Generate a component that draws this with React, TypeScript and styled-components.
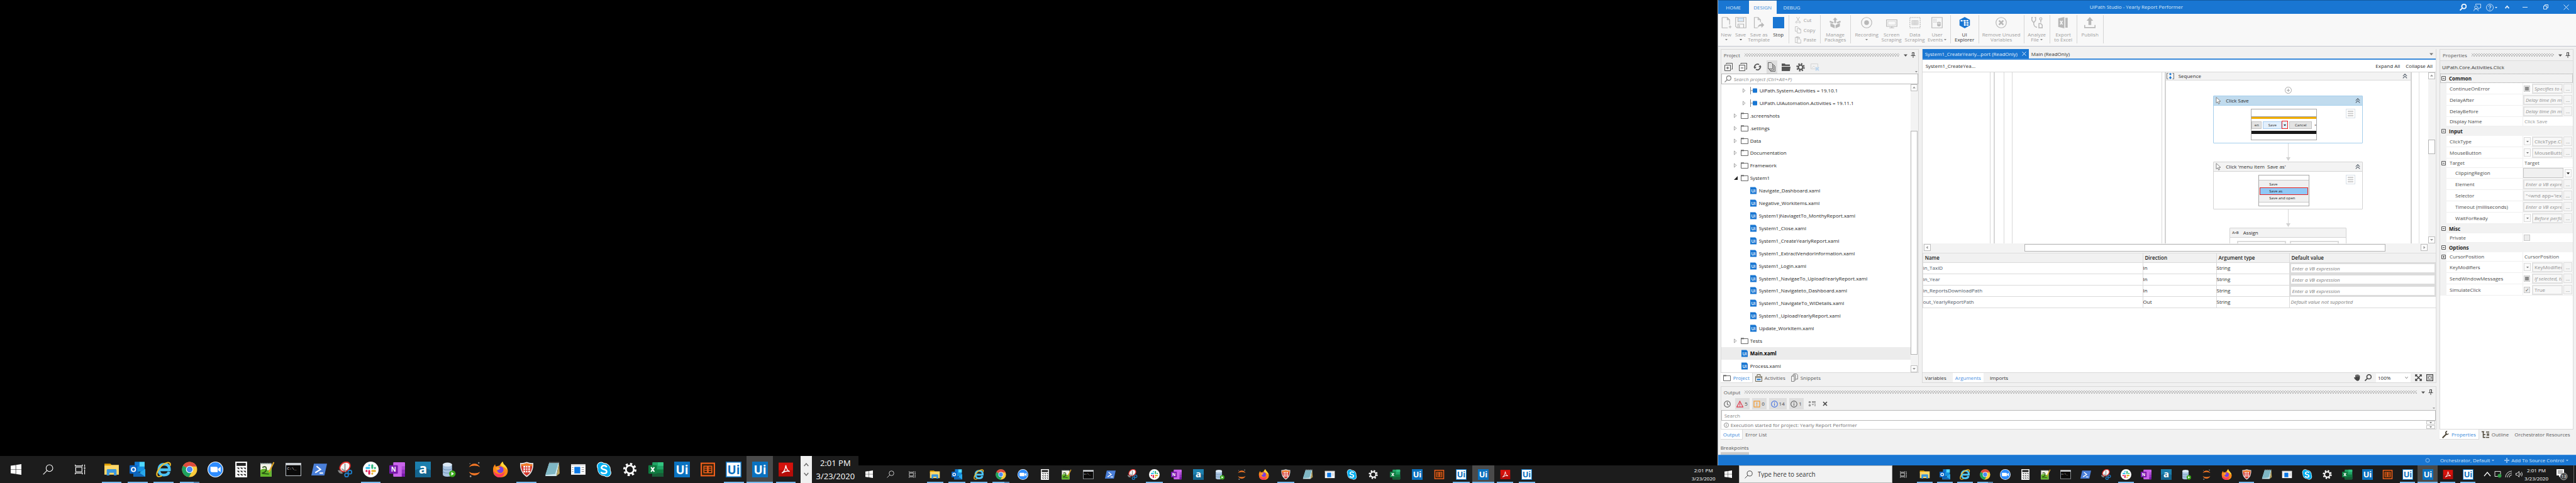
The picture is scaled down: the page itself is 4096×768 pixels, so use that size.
import React from "react";
import styled, { createGlobalStyle } from "styled-components";

const BLUE = "#1976d2";
const FONT = '"Open Sans", "Noto Sans", "Liberation Sans", sans-serif';

const Global = createGlobalStyle`
  *, *::before, *::after { box-sizing: border-box; }
  body { margin: 0; background: #000; font-family: ${FONT}; font-size: 8px; line-height: 12px; color: #2b2b2b; }
  button, input, select { font: inherit; color: inherit; margin: 0; padding: 0; border: 0; background: none; border-radius: 0; min-width: 0; }
  svg { display: block; flex: none; }
`;

/* ---------- desktop and monitors ---------- */

const Desktop = styled.div`
  display: grid;
  grid-template-columns: 1fr 1fr 1fr;
  min-height: 100vh;
`;
const Monitor = styled.section`
  display: flex;
  flex-direction: column;
  min-width: 0;
  background: #000;
`;
const Wallpaper = styled.div`
  flex: 1;
`;

/* ---------- taskbar ---------- */

const Bar = styled.footer<{ $h: number }>`
  display: flex;
  align-items: stretch;
  height: ${(p) => p.$h}px;
  background: #1c1c1c;
  color: #fff;
`;
const SysButton = styled.button<{ $w: number }>`
  width: ${(p) => p.$w}px;
  display: flex;
  align-items: center;
  justify-content: center;
  color: #fff;
`;
const AppStrip = styled.nav<{ $w: number; $left: number }>`
  display: flex;
  width: ${(p) => p.$w}px;
  margin-left: ${(p) => p.$left}px;
`;
const AppButton = styled.button<{ $state: string }>`
  flex: 1;
  display: flex;
  align-items: center;
  justify-content: center;
  background: ${(p) => (p.$state === "active" ? "#4a4a4a" : "transparent")};
  position: relative;
  &::after {
    content: "";
    position: absolute;
    left: ${(p) => (p.$state === "active" ? 0 : "12%")};
    right: ${(p) => (p.$state === "active" ? 0 : "12%")};
    bottom: 0;
    height: 2px;
    background: ${(p) =>
      p.$state === "idle" ? "none" : p.$state === "multi" ? "linear-gradient(90deg, #76b9ed 70%, #4d7fa8 70%)" : "#76b9ed"};
  }
`;
const Spacer = styled.div`
  flex: 1;
`;
const Clock = styled.div<{ $w: number; $size: number; $line: number }>`
  width: ${(p) => p.$w}px;
  display: flex;
  flex-direction: column;
  align-items: center;
  justify-content: center;
  font-size: ${(p) => p.$size}px;
  line-height: ${(p) => p.$line}px;
  color: #fff;
`;
const ScrollColumn = styled.div`
  width: 18px;
  background: #f0f0f0;
  display: flex;
  flex-direction: column;
  align-items: center;
  justify-content: space-between;
  padding: 10px 0;
`;
const TaskSearch = styled.label`
  width: 244px;
  display: flex;
  align-items: center;
  gap: 8px;
  padding-left: 8px;
  background: #f2f2f2;
  border: 1px solid #b8b8b8;
  color: #222;
  font-size: 10px;
  input { flex: 1; }
  input::placeholder { color: #333; opacity: 1; }
`;
const Tray = styled.div`
  display: flex;
  align-items: center;
  gap: 5px;
  width: 72px;
  padding-left: 9px;
`;
const Notify = styled.button`
  width: 38px;
  display: flex;
  align-items: center;
  justify-content: center;
  color: #fff;
`;
const ShowDesktop = styled.button`
  width: 4px;
  border-left: 1px solid #666;
`;

const StartIcon = ({ s }: { s: number }) => (
  <svg width={s} height={s} viewBox="0 0 24 24" fill="#fff">
    <path d="M0 3.6 11 2v9.5H0zM12 1.8 24 0v11.5H12zM0 12.5h11V22L0 20.4zM12 12.5h12V24l-12-1.8z" />
  </svg>
);
const SearchIcon = ({ s, w = 1.5, c = "currentColor" }: { s: number; w?: number; c?: string }) => (
  <svg width={s} height={s} viewBox="0 0 24 24" fill="none" stroke={c} strokeWidth={w}>
    <circle cx="15" cy="9" r="7.5" />
    <path d="M9.7 14.3 1 23" />
  </svg>
);
const TaskViewIcon = ({ s }: { s: number }) => (
  <svg width={s} height={s} viewBox="0 0 24 24" fill="none" stroke="#fff" strokeWidth="1.6">
    <path d="M2 7h14v10H2zM1 1v3h16V1M1 23v-3h16v3M22 1v5M22 12v11" />
    <path d="M20.5 7.5h3v3h-3z" fill="#fff" stroke="none" />
  </svg>
);

const UiTile = ({ bg, fg, edge }: { bg: string; fg: string; edge: string }) => (
  <>
    <rect width="24" height="24" fill={edge} />
    <rect x="1.5" y="1.5" width="21" height="21" fill={bg} />
    <text x="12" y="19" textAnchor="middle" fontFamily={FONT} fontWeight="700" fontSize="18" fill={fg}>
      Ui
    </text>
  </>
);

const glyphs: Record<string, React.ReactNode> = {
  explorer: (
    <>
      <path d="M1 3h9l2 2v4H1z" fill="#e2a100" />
      <path d="M1 6h9l2-1h11v15H1z" fill="#ffd868" />
      <path d="M4.5 21v-8q0-1.5 1.5-1.5h12q1.5 0 1.5 1.5v8h-4v-4h-7v4z" fill="#3b97dd" />
    </>
  ),
  outlook: (
    <>
      <rect x="8" y="0.5" width="15" height="15" fill="#1490df" />
      <rect x="15" y="0.5" width="8" height="7" fill="#50d9ff" />
      <rect x="8" y="0.5" width="7" height="7" fill="#0f78d4" />
      <path d="M6 11l9 6 9-6v12H6z" fill="#28a8ea" />
      <path d="M6 11l18 12H6z" fill="#1066b5" />
      <rect y="5.5" width="12" height="13" rx="1" fill="#0a63c2" />
      <circle cx="6" cy="12" r="3" fill="none" stroke="#fff" strokeWidth="1.8" />
    </>
  ),
  ie: (
    <>
      <path d="M4.5 12.5h16q.5-8.5-8-8.5-8 0-8 8.5t8 8q6 0 7.5-5" fill="none" stroke="#4cc3f4" strokeWidth="4.2" />
      <path d="M2 22C-1 17 8 3 18 1.5q5-.5 3.5 5" fill="none" stroke="#f5bf27" strokeWidth="2" />
      <path d="M2 22q2 2 7-.5" fill="none" stroke="#f5bf27" strokeWidth="1.8" />
    </>
  ),
  chrome: (
    <>
      <circle cx="12" cy="12" r="11.5" fill="#fbcb3c" />
      <path d="M12 12 2 6.2A11.5 11.5 0 0 1 22.6 7.5H12z" fill="#de4b3f" />
      <path d="M2 6.2A11.5 11.5 0 0 0 11 23.5L16 14.5 12 12z" fill="#1da260" />
      <circle cx="12" cy="12" r="5.6" fill="#fff" />
      <circle cx="12" cy="12" r="4.5" fill="#4a8af4" />
    </>
  ),
  zoom: (
    <>
      <circle cx="12" cy="12" r="12" fill="#fff" />
      <circle cx="12" cy="12" r="11" fill="#2d8cff" />
      <path d="M4.5 8h9q2 0 2 2v6h-9q-2 0-2-2zM16 11l4-3v8l-4-3z" fill="#fff" />
    </>
  ),
  calc: (
    <>
      <rect x="3" width="18" height="24" fill="#fff" />
      <rect x="5" y="2" width="14" height="4.5" fill="#222" />
      {[9, 14, 19].map((y) => (
        <path key={y} d={`M5 ${y}h4v3zM10 ${y}h4v3zM15 ${y}h4v3z`} fill="#222" />
      ))}
    </>
  ),
  npp: (
    <>
      <path d="M2 3h17v20H2z" fill="#f4f4ea" />
      <path d="M2 13q5-4 9-1t8-2v13H2z" fill="#63b62b" />
      <path d="M5 9q6-3 6 2t-5 6 9 2" fill="none" stroke="#264d12" strokeWidth="1.6" />
      <path d="M2 3h17" stroke="#9aa" strokeWidth="2" strokeDasharray="1.5 1" />
      <path d="M22.5 1 15 16" stroke="#e0a526" strokeWidth="2" />
    </>
  ),
  cmd: (
    <>
      <rect x="0.5" y="2.5" width="23" height="19" fill="#0a0a0a" stroke="#b9bec4" />
      <rect x="0.5" y="2.5" width="23" height="3" fill="#d5d9dd" />
      <text x="2.5" y="12" fontFamily="Liberation Mono, monospace" fontSize="6" fill="#ddd">
        C:\_
      </text>
    </>
  ),
  powershell: (
    <>
      <path d="M4 3h20l-4 18H0z" fill="#4a7fd8" />
      <path d="M8 7l6 5-8 5M12.5 17.5H18" fill="none" stroke="#fff" strokeWidth="2" />
    </>
  ),
  snip: (
    <>
      <ellipse cx="12" cy="8" rx="8.5" ry="6.5" transform="rotate(-38 12 8)" fill="#f3f3f3" stroke="#e2302d" strokeWidth="1.8" />
      <path d="M12 3v12M7 11l7 5" stroke="#8c8c8c" strokeWidth="1.5" />
      <path d="M1 13q5 0 8 5-6 2-8-5z" fill="#888" />
      <circle cx="19.5" cy="16" r="2.8" fill="none" stroke="#1f7bc4" strokeWidth="1.8" />
      <circle cx="14.5" cy="20.5" r="2.8" fill="none" stroke="#1f7bc4" strokeWidth="1.8" />
    </>
  ),
  slack: (
    <>
      <circle cx="12" cy="12" r="12" fill="#fff" />
      <g strokeWidth="3" strokeLinecap="round">
        <path d="M9.7 5.5v.2M5.5 9.7h4.2" stroke="#36c5f0" />
        <path d="M14.3 5.5v4.2M18.5 9.7h-.2" stroke="#2eb67d" />
        <path d="M14.3 18.5v-.2M14.3 14.3h4.2" stroke="#ecb22e" />
        <path d="M9.7 14.3v4.2M5.5 14.3h.2" stroke="#e01e5a" />
      </g>
    </>
  ),
  onenote: (
    <>
      <rect x="6" y="1" width="18" height="22" rx="1" fill="#ca64ea" />
      <path d="M19 7h5v5h-5z" fill="#ae4bd5" />
      <path d="M19 12h5v6h-5z" fill="#9332bf" />
      <path d="M19 18h5v4q0 1-1 1h-4z" fill="#7719aa" />
      <rect y="5.5" width="13" height="13" rx="1" fill="#7719aa" />
      <text x="6.5" y="15.5" textAnchor="middle" fontFamily={FONT} fontWeight="700" fontSize="9.5" fill="#fff">
        N
      </text>
    </>
  ),
  alteryx: (
    <>
      <rect width="24" height="24" fill="#1c7fae" />
      <path d="M0 13q12-6 24 0v11H0z" fill="#14658f" />
      <text x="12" y="18.5" textAnchor="middle" fontFamily={FONT} fontWeight="700" fontSize="21" fill="#fff">
        a
      </text>
    </>
  ),
  database: (
    <>
      <path d="M3 4v16q0 3 7 3t7-3V4z" fill="#a9c4e0" />
      <ellipse cx="10" cy="4.5" rx="7" ry="3" fill="#dce9f5" />
      <path d="M3 9.5q0 3 7 3t7-3M3 14.5q0 3 7 3t7-3" fill="none" stroke="#6f93b8" />
      <circle cx="17.5" cy="18.5" r="5" fill="#3aa81c" />
      <path d="M16 15.7v5.6l4-2.8z" fill="#fff" />
    </>
  ),
  jupyter: (
    <>
      <path d="M3.5 8.5q3-5.5 8.5-5.5t8.5 5.5Q17 6.300 12 6.300T3.5 8.500zM3.5 15.5q3 5.5 8.5 5.5t8.5-5.5Q17 17.700 12 17.700T3.5 15.500z" fill="#f37726" />
      <circle cx="18.5" cy="2" r="1.2" fill="#888" />
      <circle cx="6" cy="22.5" r="1.3" fill="#999" />
      <circle cx="5" cy="3" r="0.8" fill="#777" />
    </>
  ),
  firefox: (
    <>
      <path d="M1 13Q.5 8 4 4l1 3.5L11 6q2-4 4.5-6 1 4 4 6 4 4 4 8-.5 10-11.500 10T1 13z" fill="#ff8a16" />
      <path d="M1 13q3 5 8 6t10-4q-1 8-8 9T1 13z" fill="#ff3b5c" />
      <path d="M15.5 0q1 4 4 6 3 3 3 7-3-4-6-5t-4-3q1-3 3-5z" fill="#ffd83a" />
      <circle cx="12" cy="12.5" r="5" fill="#7a3fe0" />
      <path d="M5 9q4-1 7 1-2 3-5 3z" fill="#ffa62b" />
    </>
  ),
  shield: (
    <>
      <path d="M12 .5q5 2 10 1.5 1 15-10 21.5Q1 17 2 2q5 .5 10-1.500z" fill="#e8e8e8" />
      <path d="M12 2.5q4 1.5 8.5 1.5.5 12-8.5 17.5Q3 16 3.5 4 8 4 12 2.500z" fill="#d3352b" />
      <path d="M12 2.5q4 1.5 8.5 1.5v3h-17V4Q8 4 12 2.500z" fill="#ef7c26" />
      <path d="M7 6.500h10v10H7z" fill="#fff" />
      <path d="M7 9.700h10M7 13h10M10.300 6.500v10M13.700 6.500v10" stroke="#d3352b" strokeWidth="1.2" />
    </>
  ),
  notepad: (
    <>
      <path d="M7 2h15l-4 20H1z" fill="#cfe9ef" />
      <path d="M7 2h14l-5 17-15 1.500z" fill="#7fb7c4" />
      <path d="M22 2l1 16-5 4z" fill="#b9a35e" />
      <path d="M7 1.500h15" stroke="#777" strokeWidth="2" strokeDasharray="1 1" />
    </>
  ),
  panel: (
    <>
      <rect x="1" y="4" width="22" height="16" fill="#fff" />
      <rect x="1" y="4" width="22" height="2" fill="#cfcfcf" />
      <rect x="6" y="8" width="9" height="10" fill="#0a78e6" />
      <path d="M17 9h4M17 12h4M17 15h4M2.5 9h2M2.5 12h2M2.5 15h2" stroke="#999" />
    </>
  ),
  skype: (
    <>
      <circle cx="12" cy="12" r="10" fill="#fff" />
      <circle cx="7.5" cy="7" r="6.5" fill="#fff" />
      <circle cx="16.5" cy="17" r="6.5" fill="#fff" />
      <circle cx="12" cy="12" r="9.2" fill="#00aff0" />
      <circle cx="7.5" cy="7" r="5.5" fill="#00aff0" />
      <circle cx="16.5" cy="17" r="5.5" fill="#00aff0" />
      <path d="M16 8.500Q15 6 12 6t-4 3q0 2 4 3t4 3q0 3-4 3t-4.500-2.500" fill="none" stroke="#fff" strokeWidth="2.4" />
    </>
  ),
  gear: (
    <>
      <circle cx="12" cy="12" r="6" fill="none" stroke="#fff" strokeWidth="2.6" />
      <circle cx="12" cy="12" r="8.6" fill="none" stroke="#fff" strokeWidth="3" strokeDasharray="3.4 3.354" />
    </>
  ),
  excel: (
    <>
      <rect x="6" y="1" width="17" height="22" rx="1" fill="#21a366" />
      <path d="M14.5 1H22q1 0 1 1v4.500h-8.500z" fill="#33c481" />
      <path d="M6 12h17v10q0 1-1 1H6z" fill="#107c41" />
      <path d="M6 17.500h17V22q0 1-1 1H6z" fill="#185c37" />
      <rect y="5.5" width="13" height="13" rx="1" fill="#107c41" />
      <path d="M4 8.500l5 7M9 8.500l-5 7" stroke="#fff" strokeWidth="1.9" />
    </>
  ),
  uipath: <UiTile bg="#0b72c0" edge="#0b72c0" fg="#fff" />,
  uiwhite: <UiTile bg="#fff" edge="#0b72c0" fg="#0b72c0" />,
  reader: (
    <>
      <rect x="1" y="1.5" width="22" height="21" fill="#f2601c" />
      <rect x="3" y="3.5" width="18" height="17" fill="#33200c" />
      <path d="M6 7h5.500v10H6zM12.500 7H18v10h-5.500z" fill="none" stroke="#f2601c" strokeWidth="1.5" />
      <path d="M7 10h4M7 13h4M13 10h4M13 13h4" stroke="#f2601c" strokeWidth="1.2" />
    </>
  ),
  pdf: (
    <>
      <rect x="1" y="1.5" width="22" height="21" fill="#d4120c" />
      <path d="M1 13h22v9.500H1z" fill="#a80c08" opacity=".7" />
      <path d="M6 17.500q5-3 6-12 1 8 6 9.500-5-2-12 2.500z" fill="none" stroke="#fff" strokeWidth="1.4" />
    </>
  ),
};

const apps: [string, string][] = [
  ["explorer", "open"], ["outlook", "open"], ["ie", "open"], ["chrome", "multi"], ["zoom", "idle"],
  ["calc", "idle"], ["npp", "idle"], ["cmd", "idle"], ["powershell", "idle"], ["snip", "idle"],
  ["slack", "open"], ["onenote", "idle"], ["alteryx", "idle"], ["database", "idle"], ["jupyter", "idle"],
  ["firefox", "idle"], ["shield", "open"], ["notepad", "idle"], ["panel", "idle"], ["skype", "idle"],
  ["gear", "idle"], ["excel", "idle"], ["uipath", "idle"], ["reader", "idle"], ["uiwhite", "open"],
  ["uipath", "active"], ["pdf", "open"],
];
const appsWithExtra: [string, string][] = [...apps, ["uiwhite", "open"]];

const Apps = ({ list, width, left, size }: { list: [string, string][]; width: number; left: number; size: number }) => (
  <AppStrip $w={width} $left={left}>
    {list.map(([name, state], i) => (
      <AppButton key={i} $state={state} aria-label={name}>
        <svg width={size} height={size} viewBox="0 0 24 24">
          {glyphs[name]}
        </svg>
      </AppButton>
    ))}
  </AppStrip>
);

const Chevron = ({ s, d, c, w = 2 }: { s: number; d: "up" | "down"; c: string; w?: number }) => (
  <svg width={s} height={s} viewBox="0 0 12 12" fill="none" stroke={c} strokeWidth={w}>
    <path d={d === "up" ? "M1 9l5-6 5 6" : "M1 3l5 6 5-6"} />
  </svg>
);

/* ---------- small shared drawings ---------- */

const Caret = ({ c = "#777", s = 5 }: { c?: string; s?: number }) => (
  <svg width={s} height={s} viewBox="0 0 6 6">
    <path d="M0 1.500h6L3 5z" fill={c} />
  </svg>
);
const Pin = ({ c = "#555" }: { c?: string }) => (
  <svg width="8" height="9" viewBox="0 0 8 9" fill="none" stroke={c}>
    <path d="M2.500 .5h3v5h-3zM.5 5.500h7M4 5.500v3.500" />
    <path d="M5 .5v5" />
  </svg>
);
const Arrow = ({ dir, c = "#999" }: { dir: "up" | "down" | "left" | "right"; c?: string }) => {
  const d = { up: "M1 4.500h5L3.500 1.500z", down: "M1 2h5L3.500 5z", left: "M4.500 1v5L1.500 3.500z", right: "M2.500 1v5l3-2.500z" }[dir];
  return (
    <svg width="7" height="7" viewBox="0 0 7 7">
      <path d={d} fill={c} />
    </svg>
  );
};
const FolderIcon = ({ c = "#666" }: { c?: string }) => (
  <svg width="12" height="10" viewBox="0 0 12 10" fill="none" stroke={c}>
    <path d="M.5 1.500h11v8H.5z" />
    <path d="M0 1.300h5" strokeWidth="2" />
  </svg>
);
const Collapse = () => (
  <svg width="8" height="8" viewBox="0 0 10 10" fill="none" stroke="#4a5562" strokeWidth="1.3">
    <path d="M1 5l4-4 4 4M1 9.300l4-4 4 4" />
  </svg>
);

/* ---------- studio window ---------- */

const Studio = styled.main`
  flex: 1;
  min-height: 0;
  display: flex;
  flex-direction: column;
  background: #f1f1f1;
  border-left: 1px solid #a9adb3;
`;
const TitleBar = styled.header`
  height: 22px;
  display: flex;
  background: ${BLUE};
  border-top: 1px solid #135a9f;
  color: #d9e9f9;
`;
const RibbonTab = styled.button<{ $on?: boolean; $w: number }>`
  width: ${(p) => p.$w}px;
  background: ${(p) => (p.$on ? "#f8f8f8" : "transparent")};
  color: ${(p) => (p.$on ? "#3c8bdb" : "#d9e9f9")};
`;
const Title = styled.h1`
  flex: 1;
  margin: 0;
  padding-left: 16px;
  text-align: center;
  font-size: 8px;
  font-weight: 400;
  line-height: 20px;
`;
const WindowButton = styled.button<{ $w: number }>`
  width: ${(p) => p.$w}px;
  display: flex;
  gap: 2px;
  align-items: center;
  justify-content: center;
`;

const Ribbon = styled.div`
  height: 52px;
  display: flex;
  align-items: flex-start;
  padding-top: 2px;
  background: #f8f8f8;
  border-bottom: 1px solid #c3c7d0;
`;
const RibbonGroup = styled.div<{ $pad?: number }>`
  display: flex;
  height: 45px;
  padding: 0 ${(p) => p.$pad ?? 0}px;
  border-right: 1px solid #d6d6d6;
`;
const Tool = styled.button<{ $w: number; $on?: boolean }>`
  width: ${(p) => p.$w}px;
  display: flex;
  flex-direction: column;
  align-items: center;
  gap: 6px;
  padding-top: 3px;
  color: ${(p) => (p.$on ? "#3a3a3a" : "#a0a0a0")};
  line-height: 8px;
  text-align: center;
  white-space: nowrap;
`;
const ToolLabel = styled.span`
  display: flex;
  flex-direction: column;
  align-items: center;
`;
const ToolLine = styled.span`
  display: flex;
  align-items: center;
  gap: 2px;
  min-height: 8px;
`;
const Clip = styled.div`
  display: flex;
  flex-direction: column;
  justify-content: space-between;
  width: 49px;
  padding: 2px 0 0 9px;
`;
const ClipButton = styled.button`
  display: flex;
  align-items: center;
  gap: 4px;
  height: 12px;
  color: #a0a0a0;
`;

type ToolProps = { w: number; on?: boolean; lines: string[]; caret?: "below" | "inline"; caretColor?: string; children: React.ReactNode };
const RibbonTool = ({ w, on, lines, caret, caretColor = "#888", children }: ToolProps) => (
  <Tool $w={w} $on={on}>
    <svg width="18" height="18" viewBox="0 0 24 24" fill="none" stroke="#b8b8b8" strokeWidth="1.6">
      {children}
    </svg>
    <ToolLabel>
      {lines.map((l, i) => (
        <ToolLine key={l}>
          {l}
          {caret === "inline" && i === lines.length - 1 && <Caret c={caretColor} s={4} />}
        </ToolLine>
      ))}
      {caret === "below" && (
        <ToolLine>
          <Caret c={caretColor} s={4} />
        </ToolLine>
      )}
    </ToolLabel>
  </Tool>
);

const Workspace = styled.div`
  flex: 1;
  min-height: 0;
  display: flex;
  gap: 5px;
  padding: 4px 4px 0;
`;
const LeftAndCenter = styled.div`
  flex: 1;
  min-width: 0;
  display: flex;
  flex-direction: column;
  gap: 5px;
`;
const UpperRow = styled.div`
  flex: 1;
  min-height: 0;
  display: flex;
  gap: 5px;
`;
const Dock = styled.section<{ $w?: number }>`
  width: ${(p) => (p.$w ? p.$w + "px" : "auto")};
  display: flex;
  flex-direction: column;
  min-height: 0;
`;
const DockBody = styled.div`
  flex: 1;
  min-height: 0;
  display: flex;
  flex-direction: column;
  border: 1px solid #d9d9d9;
`;
const DockHeader = styled.div`
  height: 17px;
  display: flex;
  align-items: center;
  gap: 7px;
  padding: 0 4px;
  color: #5c5c5c;
`;
const Grip = styled.div`
  flex: 1;
  height: 5px;
  background-image: radial-gradient(circle, #a8a8a8 0.6px, transparent 1px), radial-gradient(circle, #a8a8a8 0.6px, transparent 1px);
  background-size: 4px 4px;
  background-position: 0 0, 2px 2px;
`;
const HeaderActions = styled.div`
  display: flex;
  align-items: center;
  gap: 5px;
`;
const DockTabs = styled.div`
  display: flex;
  height: 16px;
`;
const DockTab = styled.button<{ $on?: boolean }>`
  display: flex;
  align-items: center;
  gap: 4px;
  padding: 0 4px;
  background: ${(p) => (p.$on ? "#fff" : "transparent")};
  color: ${(p) => (p.$on ? "#3c8bdb" : "#5c5c5c")};
  border-right: 1px solid ${(p) => (p.$on ? "#dcdcdc" : "transparent")};
  border-bottom: 1px solid ${(p) => (p.$on ? "#dcdcdc" : "transparent")};
  white-space: nowrap;
`;

/* project panel */

const IconRow = styled.div`
  height: 21px;
  display: flex;
  align-items: center;
  padding-left: 3px;
`;
const IconButton = styled.button<{ $on?: boolean }>`
  width: 17px;
  height: 21px;
  margin-right: 6px;
  display: flex;
  align-items: center;
  justify-content: center;
  background: ${(p) => (p.$on ? "#dedede" : "transparent")};
`;
const More = styled.span`
  margin-left: auto;
  align-self: flex-end;
  padding: 0 1px 1px 0;
`;
const SearchField = styled.label`
  height: 17px;
  display: flex;
  align-items: center;
  gap: 4px;
  padding: 0 4px;
  background: #fff;
  border: 1px solid #b9b9b9;
  color: #777;
  input { flex: 1; }
  input::placeholder { color: #8a8a8a; opacity: 1; }
`;
const ItalicField = styled(SearchField)`
  input { font-style: italic; }
`;
const TreeArea = styled.div`
  flex: 1;
  min-height: 0;
  display: flex;
  background: #fff;
`;
const Tree = styled.ul`
  flex: 1;
  margin: 0;
  padding: 0;
  list-style: none;
  display: flex;
  flex-direction: column;
`;
const TreeItem = styled.li<{ $indent: number; $on?: boolean }>`
  flex: 1;
  display: flex;
  align-items: center;
  padding-left: ${(p) => p.$indent}px;
  background: ${(p) => (p.$on ? "#ececec" : "transparent")};
  color: ${(p) => (p.$on ? "#000" : "#262626")};
  font-weight: ${(p) => (p.$on ? 700 : 400)};
`;
const Twisty = styled.span`
  width: 11px;
`;
const ItemIcon = styled.span<{ $w: number }>`
  width: ${(p) => p.$w}px;
`;
const VBar = styled.div`
  width: 12px;
  display: flex;
  flex-direction: column;
  background: #f3f3f3;
`;
const ScrollButton = styled.button`
  width: 11px;
  height: 11px;
  display: flex;
  align-items: center;
  justify-content: center;
  background: #fff;
  border: 1px solid #bdbdbd;
`;
const Track = styled.div<{ $grow: number }>`
  flex: ${(p) => p.$grow};
`;
const VThumb = styled.div<{ $grow: number }>`
  flex: ${(p) => p.$grow};
  width: 11px;
  background: #fff;
  border: 1px solid #b4b4b4;
`;

const XamlIcon = () => (
  <svg width="10" height="12" viewBox="0 0 10 12">
    <path d="M0 .5h8L10 2.500v9H0z" fill={BLUE} />
    <text x="5" y="8.5" textAnchor="middle" fontFamily={FONT} fontWeight="600" fontSize="7" fill="#fff">
      Ui
    </text>
  </svg>
);
const DepIcon = () => (
  <svg width="13" height="12" viewBox="0 0 13 12">
    <path d="M1.500 0v12M1.500 6h4" stroke="#888" fill="none" />
    <rect x="5" y="2.5" width="7" height="7" rx="1" fill={BLUE} />
  </svg>
);
const ClosedTwisty = () => (
  <svg width="5" height="8" viewBox="0 0 5 8" fill="none" stroke="#9a9a9a" strokeWidth="0.9">
    <path d="M.5 1v6L4 4z" />
  </svg>
);
const OpenTwisty = () => (
  <svg width="6" height="6" viewBox="0 0 6 6">
    <path d="M6 0v6H0z" fill="#222" />
  </svg>
);

type Node = { t: string; kind: "dep" | "folder" | "open" | "file" | "root"; on?: boolean };
const nodes: Node[] = [
  { t: "UiPath.System.Activities = 19.10.1", kind: "dep" },
  { t: "UiPath.UIAutomation.Activities = 19.11.1", kind: "dep" },
  { t: ".screenshots", kind: "folder" },
  { t: ".settings", kind: "folder" },
  { t: "Data", kind: "folder" },
  { t: "Documentation", kind: "folder" },
  { t: "Framework", kind: "folder" },
  { t: "System1", kind: "open" },
  { t: "Navigate_Dashboard.xaml", kind: "file" },
  { t: "Negative_Workitems.xaml", kind: "file" },
  { t: "System1)NaviagetTo_MonthyReport.xaml", kind: "file" },
  { t: "System1_Close.xaml", kind: "file" },
  { t: "System1_CreateYearlyReport.xaml", kind: "file" },
  { t: "System1_ExtractVendorInformation.xaml", kind: "file" },
  { t: "System1_Login.xaml", kind: "file" },
  { t: "System1_NavigaeTo_UploadYearlyReport.xaml", kind: "file" },
  { t: "System1_Navigateto_Dashboard.xaml", kind: "file" },
  { t: "System1_NavigateTo_WIDetails.xaml", kind: "file" },
  { t: "System1_UploadYearlyReport.xaml", kind: "file" },
  { t: "Update_WorkItem.xaml", kind: "file" },
  { t: "Tests", kind: "folder" },
  { t: "Main.xaml", kind: "root", on: true },
  { t: "Process.xaml", kind: "root" },
];
const indents = { dep: 34, folder: 20, open: 20, file: 46, root: 32 };

/* designer */

const Designer = styled.section`
  flex: 1;
  min-width: 0;
  display: flex;
  flex-direction: column;
  border: 1px solid #d9d9d9;
  border-top: 0;
`;
const DocTabs = styled.div`
  height: 17px;
  display: flex;
  border-bottom: 2px solid #3c8bdb;
  padding-right: 4px;
  align-items: stretch;
`;
const DocTab = styled.button<{ $on?: boolean }>`
  display: flex;
  align-items: center;
  gap: 7px;
  padding: 0 4px;
  background: ${(p) => (p.$on ? BLUE : "transparent")};
  color: ${(p) => (p.$on ? "#e4effa" : "#333")};
  white-space: nowrap;
`;
const DocMenu = styled.button`
  margin-left: auto;
`;
const Crumbs = styled.div`
  height: 20px;
  display: flex;
  align-items: center;
  gap: 9px;
  padding: 0 5px;
  background: #fff;
  border-bottom: 1px solid #d9d9d9;
`;
const CanvasRow = styled.div`
  height: 272px;
  display: flex;
  background: #fff;
`;
const Frame = styled.div<{ $line?: number; $gap: number }>`
  flex: 1;
  min-width: 0;
  display: flex;
  margin-left: ${(p) => p.$gap}px;
  border-left: ${(p) => p.$line ?? 1}px solid #d8d8d8;
`;
const OuterSeq = styled(Frame)`
  border-right: 1px solid #dedede;
  padding-right: 11px;
  margin-right: 14px;
`;
const Sequence = styled.div`
  flex: 1;
  display: flex;
  flex-direction: column;
  overflow: hidden;
  margin-left: 4px;
  border: solid #d3d3d3;
  border-width: 0 2px;
`;
const SequenceHeader = styled.div`
  height: 13px;
  flex: none;
  display: flex;
  align-items: center;
  gap: 7px;
  padding: 0 5px 0 1px;
  background: #f3f3f3;
  border-bottom: 1px solid #d9d9d9;
`;
const Push = styled.span`
  margin-left: auto;
`;
const Steps = styled.div`
  display: flex;
  flex-direction: column;
  align-items: center;
  padding-top: 10px;
`;
const AddStep = styled.button`
  margin-bottom: 3px;
`;
const Activity = styled.article<{ $w: number; $on?: boolean }>`
  width: ${(p) => p.$w}px;
  flex: none;
  background: #fff;
  border: 1px solid ${(p) => (p.$on ? "#a5cfec" : "#d4d4d4")};
  border-radius: 1px;
`;
const ActivityHead = styled.header<{ $on?: boolean }>`
  height: 15px;
  display: flex;
  align-items: center;
  gap: 7px;
  padding: 0 3px;
  background: ${(p) => (p.$on ? "#c0dbee" : "#f3f3f3")};
  border-bottom: 1px solid ${(p) => (p.$on ? "#a5cfec" : "#d4d4d4")};
`;
const ActivityBody = styled.div`
  height: 59px;
  display: grid;
  grid-template-columns: 45px 1fr 58px;
  justify-items: center;
  padding-top: 5px;
`;
const Spot = styled.div`
  grid-column: 2;
`;
const Burger = styled.button`
  width: 15px;
  height: 15px;
  margin-left: 20px;
  border: 1px solid #d8e0e8;
  display: flex;
  align-items: center;
  justify-content: center;
`;
const Shot = styled.div<{ $w: number }>`
  width: ${(p) => p.$w}px;
  height: 50px;
  border: 1px solid #a8a8a8;
  display: flex;
  flex-direction: column;
  overflow: hidden;
  background: #fff;
  font-size: 6px;
  line-height: 10px;
`;
const GoldLine = styled.div`
  margin-top: 11px;
  height: 4px;
  flex: none;
  background: #f2ae00;
  border-top: 1px solid #999;
`;
const PromptRow = styled.div`
  height: 19px;
  flex: none;
  display: flex;
  align-items: center;
  gap: 2px;
`;
const PromptButton = styled.span<{ $w: number; $blue?: boolean }>`
  width: ${(p) => p.$w}px;
  height: 12px;
  flex: none;
  text-align: center;
  background: ${(p) => (p.$blue ? "#e2effc" : "#e3e3e3")};
  border: 1px solid ${(p) => (p.$blue ? "#a9cdf0" : "#c3c3c3")};
`;
const RedBox = styled.span`
  width: 10px;
  height: 13px;
  flex: none;
  margin-left: -2px;
  border: 1px solid #f02020;
  background: #e2effc;
  display: flex;
  align-items: center;
  justify-content: center;
`;
const BlackLine = styled.div`
  height: 5px;
  flex: none;
  background: #1a1a1a;
`;
const MenuShot = styled.div`
  margin-top: 7px;
  padding: 1px;
  background: #f0f0f0;
  border: solid #c8c8c8;
  border-width: 1px 0;
`;
const MenuLine = styled.div<{ $hot?: boolean }>`
  height: ${(p) => (p.$hot ? 12 : 10)}px;
  line-height: 10px;
  padding-left: ${(p) => (p.$hot ? 14 : 15)}px;
  color: #222;
  background: ${(p) => (p.$hot ? "#90c8f6" : "transparent")};
  border: ${(p) => (p.$hot ? "1px solid #e62020" : "0 solid transparent")};
`;
const AssignMark = styled.b`
  font-size: 6px;
  color: #666;
`;
const AssignBody = styled.div`
  display: flex;
  justify-content: space-between;
  padding: 5px 11px;
`;
const AssignInput = styled.input`
  width: 78px;
  height: 16px;
  text-align: center;
  border: 2px solid #dcdcdc;
`;
const HBar = styled.div`
  height: 16px;
  display: flex;
  align-items: flex-start;
  padding: 1px 13px 0 2px;
  background: #f3f3f3;
  border-bottom: 1px solid #dedede;
`;
const HThumb = styled.div<{ $grow: number }>`
  flex: ${(p) => p.$grow};
  height: 12px;
  background: #fff;
  border: 1px solid #b4b4b4;
`;
const ArgArea = styled.div`
  flex: 1;
  min-height: 0;
  background: #fff;
  border-bottom: 1px solid #d9d9d9;
`;
const ArgTable = styled.table`
  width: 100%;
  border-collapse: collapse;
  table-layout: fixed;
  th, td { padding: 0; height: 18px; text-align: left; border: 1px solid #dadada; border-width: 0 0 1px 1px; }
  th { height: 14px; padding-left: 3px; background: #f1f1f1; color: #1c1c1c; font-weight: 600; }
  td:first-child { color: #4c5664; }
  em { color: #7d7d7d; padding-left: 2px; }
`;
const ExprInput = styled.input`
  display: block;
  width: 100%;
  height: 17px;
  padding-left: 2px;
  border: 2px solid #dcdcdc;
  background: #fff;
  font-style: italic;
  &::placeholder { color: #7d7d7d; opacity: 1; }
`;
const DesignerFoot = styled.div`
  height: 15px;
  display: flex;
  align-items: center;
`;
const FootTab = styled.button<{ $on?: boolean }>`
  height: 15px;
  margin-right: 6px;
  padding: 0 4px;
  background: ${(p) => (p.$on ? "#fff" : "transparent")};
  color: ${(p) => (p.$on ? "#4a90e2" : "#333")};
`;
const FootTools = styled.div`
  margin-left: auto;
  display: flex;
  align-items: center;
  gap: 7px;
  padding-right: 4px;
`;
const ZoomBox = styled.div`
  width: 55px;
  height: 14px;
  display: flex;
  align-items: center;
  padding: 0 4px 0 3px;
  background: #fff;
`;
const ZoomSelect = styled.select`
  appearance: none;
  flex: 1;
`;

/* output */

const OutputBar = styled.div`
  height: 20px;
  display: flex;
  align-items: center;
  padding-left: 4px;
`;
const TimeButton = styled.button`
  margin-right: 7px;
`;
const Counter = styled.button<{ $w: number; $c: string }>`
  width: ${(p) => p.$w}px;
  height: 18px;
  margin-right: 4px;
  display: flex;
  align-items: center;
  justify-content: center;
  gap: 2px;
  background: #dedede;
  color: #444;
  svg { color: ${(p) => p.$c}; }
`;
const LogRow = styled.div`
  height: 13px;
  display: flex;
  align-items: center;
  gap: 3px;
  padding-left: 4px;
  background: #fff;
  color: #757575;
`;
const LogScroll = styled.div`
  margin-left: auto;
  display: flex;
  flex-direction: column;
  gap: 1px;
  padding-right: 1px;
  button { width: 14px; height: 6px; display: flex; align-items: center; justify-content: center; border: 1px solid #c4c4c4; }
`;
const Breakpoints = styled.div`
  height: 24px;
  display: flex;
  align-items: flex-end;
  padding-left: 4px;
`;
const BreakTab = styled.button`
  height: 17px;
  padding-bottom: 1px;
  line-height: 10px;
  border-bottom: 4px solid #cbcbcb;
  color: #555;
`;
const StatusBar = styled.div`
  height: 17px;
  display: flex;
  align-items: center;
  justify-content: flex-end;
  gap: 3px;
  padding-right: 12px;
  background: ${BLUE};
  color: #d2e4f7;
  border-top: 1px solid #4a93dd;
`;
const StatusButton = styled.button`
  display: flex;
  align-items: center;
  gap: 3px;
  margin-left: 13px;
`;

/* properties */

const TypeName = styled.div`
  height: 21px;
  padding-left: 3px;
  line-height: 19px;
  background: #eeeeee;
  border-top: 1px solid #dcdcdc;
  color: #333;
`;
const PropArea = styled.div`
  flex: 1;
  background: #fff;
`;
const Group = styled.h2<{ $first?: boolean }>`
  height: 15px;
  margin: 0;
  display: flex;
  align-items: center;
  gap: 5px;
  padding-left: 2px;
  background: #f2f2f2;
  font-size: 8px;
  font-weight: 700;
  color: #222;
  outline: ${(p) => (p.$first ? "1px dotted #999" : "none")};
  outline-offset: -1px;
`;
const Prop = styled.div<{ $h: number }>`
  height: ${(p) => p.$h}px;
  display: grid;
  grid-template-columns: 10px 121px 1fr;
`;
const Gutter = styled.div`
  background: #f2f2f2;
  display: flex;
  align-items: center;
  justify-content: center;
`;
const PropName = styled.label<{ $nested?: boolean }>`
  padding-left: ${(p) => (p.$nested ? 14 : 5)}px;
  display: flex;
  align-items: center;
  color: #4a4a4a;
  border-bottom: 1px solid #efefef;
`;
const PropValue = styled.div`
  display: flex;
  align-items: center;
  gap: 1px;
  min-width: 0;
  border: solid #efefef;
  border-width: 0 0 1px 1px;
  padding-right: 1px;
`;
const PropInput = styled.input<{ $italic?: boolean }>`
  flex: 1;
  width: 10px;
  height: 16px;
  padding-left: 2px;
  background: #f8f8f8;
  border: 2px solid #e2e2e2;
  font-style: ${(p) => (p.$italic ? "italic" : "normal")};
  color: #8f8f8f;
`;
const PlainInput = styled.input`
  flex: 1;
  padding-left: 2px;
  color: ${(p) => (p.disabled ? "#9b9b9b" : "#555")};
`;
const Dots = styled.button`
  width: 14px;
  height: 15px;
  background: #f5f5f5;
  border: 1px solid #dadada;
  color: #888;
  line-height: 12px;
`;
const Drop = styled.button`
  width: 11px;
  height: 13px;
  margin: 0 1px;
  display: flex;
  align-items: center;
  justify-content: center;
  background: #fafafa;
  border: 1px solid #dadada;
`;
const Check = styled.input`
  appearance: none;
  width: 10px;
  height: 10px;
  margin: 0 2px 0 1px;
  background: #ececec;
  border: 1px solid #c8c8c8;
  display: grid;
  place-items: center;
  &[data-mixed="true"]::before { content: ""; width: 6px; height: 6px; background: #8c8c8c; }
  &:checked::before { content: "✓"; color: #555; line-height: 8px; font-size: 8px; }
`;
const Region = styled.select`
  appearance: none;
  flex: 1;
  height: 16px;
  background: #f0f0f0;
  border: 1px solid #c6c6c6;
`;

const Toggle = ({ plus }: { plus?: boolean }) => (
  <svg width="7" height="7" viewBox="0 0 7 7" fill="none" stroke="#555">
    <path d={plus ? "M.5.5h6v6h-6zM2 3.500h3M3.500 2v3" : "M.5.5h6v6h-6zM2 3.500h3"} />
  </svg>
);

type PropRow =
  | { g: string }
  | { n: string; v?: string; k: "expr" | "dots" | "drop" | "mixed" | "checked" | "plain" | "text" | "box" | "region"; nested?: boolean; italic?: boolean; sign?: "-" | "+"; h?: number };
const props: PropRow[] = [
  { g: "Common" },
  { n: "ContinueOnError", v: "Specifies to continue", k: "mixed", italic: true },
  { n: "DelayAfter", v: "Delay time (in milliseconds)", k: "dots", italic: true },
  { n: "DelayBefore", v: "Delay time (in milliseconds)", k: "dots", italic: true },
  { n: "Display Name", v: "Click Save", k: "text", h: 15 },
  { g: "Input" },
  { n: "ClickType", v: "ClickType.CLICK_SINGLE", k: "drop" },
  { n: "MouseButton", v: "MouseButton.BTN_LEFT", k: "drop" },
  { n: "Target", v: "Target", k: "plain", sign: "-", h: 15 },
  { n: "ClippingRegion", k: "region", nested: true, h: 17 },
  { n: "Element", v: "Enter a VB expression", k: "dots", nested: true, italic: true },
  { n: "Selector", v: "\"<wnd app='iexplore.exe' />\"", k: "dots", nested: true },
  { n: "Timeout (milliseconds)", v: "Enter a VB expression", k: "dots", nested: true, italic: true },
  { n: "WaitForReady", v: "Before performing", k: "drop", nested: true, italic: true },
  { g: "Misc" },
  { n: "Private", k: "box", h: 15 },
  { g: "Options" },
  { n: "CursorPosition", v: "CursorPosition", k: "plain", sign: "+", h: 15 },
  { n: "KeyModifiers", v: "KeyModifiers.None", k: "drop" },
  { n: "SendWindowMessages", v: "If selected, the click", k: "mixed", italic: true },
  { n: "SimulateClick", v: "True", k: "checked" },
];

const PropertyLine = ({ row }: { row: PropRow }) => {
  if ("g" in row)
    return (
      <Group $first={row.g === "Common"}>
        <Toggle />
        {row.g}
      </Group>
    );
  const id = "prop-" + row.n.split(" ")[0];
  const field = ["mixed", "checked", "drop", "dots"].includes(row.k);
  return (
    <Prop $h={row.h ?? 18}>
      <Gutter>{row.sign && <Toggle plus={row.sign === "+"} />}</Gutter>
      <PropName htmlFor={id} $nested={row.nested}>
        {row.n}
      </PropName>
      <PropValue>
        {row.k === "mixed" && <Check type="checkbox" data-mixed="true" aria-label={row.n} />}
        {row.k === "checked" && <Check type="checkbox" defaultChecked aria-label={row.n} />}
        {row.k === "box" && <Check type="checkbox" id={id} />}
        {row.k === "drop" && (
          <Drop aria-label={row.n + " options"}>
            <Caret s={4} />
          </Drop>
        )}
        {field && <PropInput id={id} $italic={row.italic} defaultValue={row.v} />}
        {field && <Dots aria-label={"Edit " + row.n}>...</Dots>}
        {row.k === "text" && <PlainInput id={id} defaultValue={row.v} disabled />}
        {row.k === "plain" && <PlainInput id={id} defaultValue={row.v} />}
        {row.k === "region" && (
          <>
            <Region id={id} />
            <Drop aria-label="Regions">
              <Caret c="#222" s={5} />
            </Drop>
          </>
        )}
      </PropValue>
    </Prop>
  );
};

const Cursor = () => (
  <svg width="9" height="12" viewBox="0 0 9 12" fill="#fff" stroke="#777" strokeWidth="0.9">
    <path d="M1 .8v9l2.200-2 1.500 3.500 1.600-.7L4.800 7.200H8z" />
  </svg>
);
const Connector = ({ h }: { h: number }) => (
  <svg width="7" height={h} viewBox={`0 0 7 ${h}`}>
    <path d={`M3.500 0v${h - 6}`} stroke="#d8d8d8" />
    <path d={`M0 ${h - 7}h7L3.500 ${h - 1}z`} fill="#d2d2d2" />
  </svg>
);
const BurgerIcon = () => (
  <Burger aria-label="Options">
    <svg width="11" height="11" viewBox="0 0 11 11" stroke="#cfcfcf" strokeWidth="2">
      <path d="M1 2h9M1 5.500h9M1 9h9" />
    </svg>
  </Burger>
);

const InfoGlyph = ({ s }: { s: number }) => (
  <svg width={s} height={s} viewBox="0 0 12 12" fill="none" stroke="currentColor" strokeWidth="1.2">
    <circle cx="6" cy="6" r="5.3" />
    <path d="M6 5v4M6 2.800v1.300" />
  </svg>
);

export default function App() {
  return (
    <>
      <Global />
      <Desktop>
        <Monitor>
          <Wallpaper />
          <Bar $h={43}>
            <SysButton $w={51} aria-label="Start"><StartIcon s={17} /></SysButton>
            <SysButton $w={51} aria-label="Search"><SearchIcon s={17} /></SysButton>
            <SysButton $w={51} aria-label="Task view"><TaskViewIcon s={17} /></SysButton>
            <Apps list={apps} width={1113} left={4} size={25} />
            <Spacer />
            <ScrollColumn>
              <Chevron s={8} d="up" c="#666" />
              <Chevron s={8} d="down" c="#666" />
            </ScrollColumn>
            <Clock $w={74} $size={13} $line={21}>
              <span>2:01 PM</span>
              <span>3/23/2020</span>
            </Clock>
          </Bar>
        </Monitor>

        <Monitor>
          <Wallpaper />
          <Bar $h={28}>
            <SysButton $w={34} aria-label="Start"><StartIcon s={12} /></SysButton>
            <SysButton $w={34} aria-label="Search"><SearchIcon s={12} /></SysButton>
            <SysButton $w={35} aria-label="Task view"><TaskViewIcon s={11} /></SysButton>
            <Apps list={appsWithExtra} width={976} left={1} size={17} />
            <Spacer />
            <Clock $w={44} $size={8} $line={13}>
              <span>2:01 PM</span>
              <span>3/23/2020</span>
            </Clock>
          </Bar>
        </Monitor>

        <Monitor>
          <Studio>
            <TitleBar>
              <RibbonTab $w={49}>HOME</RibbonTab>
              <RibbonTab $w={44} $on>DESIGN</RibbonTab>
              <RibbonTab $w={49}>DEBUG</RibbonTab>
              <Title>UiPath Studio - Yearly Report Performer</Title>
              <WindowButton $w={24} aria-label="Search"><SearchIcon s={11} w={4} c="#fff" /></WindowButton>
              <WindowButton $w={22} aria-label="Feedback">
                <svg width="12" height="12" viewBox="0 0 24 24" fill="none" stroke="#d9e9f9" strokeWidth="1.8">
                  <circle cx="8" cy="11" r="4.5" />
                  <path d="M1 23q0-7 7-7t7 7M7 4V1h16v12h-3l-4 4v-5" />
                </svg>
              </WindowButton>
              <WindowButton $w={23} aria-label="Help">
                <svg width="12" height="12" viewBox="0 0 24 24" fill="none" stroke="#d9e9f9" strokeWidth="1.8">
                  <circle cx="12" cy="12" r="11" />
                  <path d="M8.500 9.500q0-4 3.500-4t3.500 3q0 2-3.500 4.500v2M12 17v2.500" strokeWidth="2.2" />
                </svg>
                <Caret c="#d9e9f9" s={4} />
              </WindowButton>
              <WindowButton $w={26} aria-label="Collapse ribbon"><Chevron s={7} d="up" c="#e6f1fc" w={3} /></WindowButton>
              <WindowButton $w={33} aria-label="Minimize">
                <svg width="9" height="9" viewBox="0 0 9 9" stroke="#d9e9f9"><path d="M0 4.500h8" /></svg>
              </WindowButton>
              <WindowButton $w={32} aria-label="Restore">
                <svg width="9" height="9" viewBox="0 0 9 9" fill="none" stroke="#d9e9f9"><path d="M.5 2.500h5v5h-5zM2.500 2V.5h5v5H6" /></svg>
              </WindowButton>
              <WindowButton $w={32} aria-label="Close">
                <svg width="9" height="9" viewBox="0 0 9 9" stroke="#d9e9f9"><path d="M.5.5l8 8M8.500.5l-8 8" /></svg>
              </WindowButton>
            </TitleBar>

            <Ribbon>
              <RibbonGroup $pad={2}>
                <RibbonTool w={22} lines={["New"]} caret="below">
                  <path d="M3 1h11l5 5v10M15 23H3V1M14 1v5h5M20 18v6M17 21h6" />
                </RibbonTool>
                <RibbonTool w={24} lines={["Save"]} caret="below" caretColor="#555">
                  <path d="M1 1h22v22H4l-3-3zM6 23v-8h12v8M9 17v6M6 1v9h12V1" />
                  <path d="M7 3.500h10M7 7h10" stroke="#a8cdf0" />
                </RibbonTool>
                <RibbonTool w={34} lines={["Save as", "Template"]}>
                  <path d="M15 11V6l-5-5H2v22h7M10 1v5h5" />
                  <path d="M9 23q1-8 8-8v-4l6 6-6 6v-4q-5-1-8 4z" fill="#b8b8b8" stroke="none" />
                </RibbonTool>
                <RibbonTool w={28} lines={["Stop"]} on>
                  <rect x="0" y="0" width="24" height="24" fill={BLUE} stroke="none" />
                </RibbonTool>
              </RibbonGroup>
              <RibbonGroup>
                <Clip>
                  <ClipButton>
                    <svg width="10" height="10" viewBox="0 0 12 12" fill="none" stroke="#b8b8b8">
                      <path d="M3 0l5 8M9 0L4 8" /><circle cx="3" cy="10" r="1.5" /><circle cx="9" cy="10" r="1.5" />
                    </svg>
                    Cut
                  </ClipButton>
                  <ClipButton>
                    <svg width="10" height="11" viewBox="0 0 12 13" fill="none" stroke="#b8b8b8">
                      <path d="M4 9H.5V.5H5L7 2.500M4.500 3.500H9l2.500 2.500v6.500h-7zM8.500 3.500V6h3" />
                    </svg>
                    Copy
                  </ClipButton>
                  <ClipButton>
                    <svg width="10" height="11" viewBox="0 0 12 13" fill="none" stroke="#b8b8b8">
                      <path d="M4 11.500H.5v-10H9V4M3 .5h3.500v2H3zM4.500 4.500H9l2.500 2v6h-7z" />
                    </svg>
                    Paste
                  </ClipButton>
                </Clip>
              </RibbonGroup>
              <RibbonGroup>
                <RibbonTool w={47} lines={["Manage", "Packages"]}>
                  <g fill="#b8b8b8" stroke="none">
                    <path d="M2 13l9 4v7l-9-4zM22 13l-9 4v7l9-4zM1 8l8 3-2 3-7-3zM23 8l-8 3 2 3 7-3z" />
                    <path d="M12 1l5 5h-3v7h-4V6H7z" />
                  </g>
                </RibbonTool>
              </RibbonGroup>
              <RibbonGroup $pad={4}>
                <RibbonTool w={43} lines={["Recording"]} caret="below">
                  <circle cx="12" cy="12" r="11" />
                  <circle cx="12" cy="12" r="5" fill="#b8b8b8" stroke="none" />
                </RibbonTool>
                <RibbonTool w={36} lines={["Screen", "Scraping"]}>
                  <path d="M1 6h22v14H1zM7 23h10M12 20v3" />
                  <path d="M4 9h16v8H4z" strokeDasharray="2 1" strokeWidth="1" />
                </RibbonTool>
                <RibbonTool w={38} lines={["Data", "Scraping"]}>
                  <path d="M1 1h22v22H1z" strokeDasharray="2 2" strokeWidth="2" />
                  <path d="M5.500 7.500h13v9h-13zM5.500 10.500h13M5.500 13.500h13M10 7.500v9M14 7.500v9" strokeWidth="1" />
                </RibbonTool>
                <RibbonTool w={33} lines={["User", "Events"]} caret="inline">
                  <path d="M1 1h22v22H1z" />
                  <path d="M4 5h7M4 8h7M4 11h7" strokeDasharray="1.5 1.2" />
                  <path d="M12 14q0-4 4-4t4 4v2q0 4-4 4t-4-4z" fill="#b8b8b8" stroke="none" />
                  <path d="M12 14.500h8M16 10v4.500" stroke="#f8f8f8" strokeWidth="1" />
                </RibbonTool>
              </RibbonGroup>
              <RibbonGroup>
                <RibbonTool w={44} lines={["UI", "Explorer"]} on>
                  <path d="M12 0l11 6v12l-11 6-11-6V6z" fill={BLUE} stroke="none" />
                  <path d="M5 8h14M12 8v9h7M12 12.500h7" stroke="#fff" strokeWidth="1.3" />
                  <g fill="#fff" stroke="none">
                    <circle cx="5" cy="8" r="1.8" /><circle cx="12" cy="8" r="1.8" /><circle cx="18" cy="8" r="1.8" />
                    <circle cx="12" cy="12.5" r="1.8" /><circle cx="18.5" cy="12.5" r="1.8" /><circle cx="12" cy="17" r="1.8" /><circle cx="18.5" cy="17" r="1.8" />
                  </g>
                </RibbonTool>
              </RibbonGroup>
              <RibbonGroup>
                <RibbonTool w={71} lines={["Remove Unused", "Variables"]}>
                  <circle cx="12" cy="12" r="11" />
                  <path d="M7.500 7.500l9 9M16.500 7.500l-9 9" strokeWidth="3.5" />
                </RibbonTool>
              </RibbonGroup>
              <RibbonGroup>
                <RibbonTool w={40} lines={["Analyze", "File"]} caret="inline">
                  <path d="M3 1H1v6l4 5 4-5V1H7M5 12v3q1 6 7 7M20 6.500v5M16 14h4l3 3v6h-7z" strokeWidth="1.9" />
                  <circle cx="20" cy="4" r="2.5" />
                </RibbonTool>
              </RibbonGroup>
              <RibbonGroup>
                <RibbonTool w={42} lines={["Export", "to Excel"]}>
                  <path d="M1 3l13-3v24L1 21zM16 1.500h5v21h-5z" fill="#b8b8b8" stroke="none" />
                  <path d="M5 8l5 8M10 8l-5 8" stroke="#f8f8f8" strokeWidth="2" />
                </RibbonTool>
              </RibbonGroup>
              <RibbonGroup>
                <RibbonTool w={41} lines={["Publish"]}>
                  <path d="M12 0l7 8h-4v9H9V8H5z" fill="#b8b8b8" stroke="none" />
                  <path d="M1 17v5.500h22V17" strokeWidth="2.2" />
                </RibbonTool>
              </RibbonGroup>
            </Ribbon>

            <Workspace>
              <LeftAndCenter>
                <UpperRow>
                  <Dock $w={315}>
                    <DockBody>
                      <DockHeader>
                        Project
                        <Grip />
                        <HeaderActions><Caret c="#555" s={6} /><Pin /></HeaderActions>
                      </DockHeader>
                      <IconRow>
                        <IconButton aria-label="Expand all">
                          <svg width="13" height="13" viewBox="0 0 13 13" fill="none" stroke="#555"><path d="M.5 3.500h9v9h-9zM3 8h4M5 6v4M3 2V.5h9.500V10H11" /></svg>
                        </IconButton>
                        <IconButton aria-label="Collapse all">
                          <svg width="13" height="13" viewBox="0 0 13 13" fill="none" stroke="#555"><path d="M.5 3.500h9v9h-9zM3 8h4M3 2V.5h9.500V10H11" /></svg>
                        </IconButton>
                        <IconButton aria-label="Refresh">
                          <svg width="13" height="13" viewBox="0 0 13 13" fill="none" stroke="#555" strokeWidth="1.8">
                            <path d="M2.500 8.500A4.500 4.500 0 0 1 9 2.700M10.500 4.500A4.500 4.500 0 0 1 4 10.300" />
                            <path d="M0 6.500h5L2.500 9.500zM8 6.500h5L10.500 3.500z" fill="#555" stroke="none" />
                          </svg>
                        </IconButton>
                        <IconButton $on aria-label="Show all files">
                          <svg width="12" height="15" viewBox="0 0 12 15" fill="none" stroke="#666"><path d="M.5.5h5l2 2v8h-7zM2.500 10.500v2h7v-8l-2-2M4.500 12.500v2h7v-8l-2-2" /></svg>
                        </IconButton>
                        <IconButton aria-label="Open folder">
                          <svg width="14" height="12" viewBox="0 0 14 12" fill="#555"><path d="M0 0h5l1 1.500h7V4H0zM0 5h14l-1 7H0z" /></svg>
                        </IconButton>
                        <IconButton aria-label="Settings">
                          <svg width="14" height="14" viewBox="0 0 24 24" fill="none" stroke="#555">
                            <circle cx="12" cy="12" r="6" strokeWidth="3.5" />
                            <circle cx="12" cy="12" r="9.5" strokeWidth="4" strokeDasharray="3.9 3.561" />
                          </svg>
                        </IconButton>
                        <IconButton aria-label="Remove unused screenshots">
                          <svg width="14" height="12" viewBox="0 0 14 12" fill="none" stroke="#d5d5d5">
                            <path d="M.5.5h11v8H.5zM2 7l3-3 2 2" />
                            <path d="M8 6l5 5M13 6l-5 5" stroke="#bcd6ef" strokeWidth="2" />
                          </svg>
                        </IconButton>
                        <More><Caret c="#888" s={4} /></More>
                      </IconRow>
                      <ItalicField>
                        <SearchIcon s={11} w={2.5} />
                        <input placeholder="Search project (Ctrl+Alt+P)" />
                      </ItalicField>
                      <TreeArea>
                        <Tree>
                          {nodes.map((n) => (
                            <TreeItem key={n.t} $indent={indents[n.kind]} $on={n.on}>
                              {(n.kind === "folder" || n.kind === "dep" || n.kind === "open") && (
                                <Twisty>{n.kind === "open" ? <OpenTwisty /> : <ClosedTwisty />}</Twisty>
                              )}
                              {n.kind === "dep" ? (
                                <ItemIcon $w={16}><DepIcon /></ItemIcon>
                              ) : n.kind === "folder" || n.kind === "open" ? (
                                <ItemIcon $w={15}><FolderIcon /></ItemIcon>
                              ) : (
                                <ItemIcon $w={14}><XamlIcon /></ItemIcon>
                              )}
                              {n.t}
                            </TreeItem>
                          ))}
                        </Tree>
                        <VBar>
                          <ScrollButton aria-label="Scroll up"><Arrow dir="up" /></ScrollButton>
                          <Track $grow={63} />
                          <VThumb $grow={357} />
                          <Track $grow={17} />
                          <ScrollButton aria-label="Scroll down"><Arrow dir="down" /></ScrollButton>
                        </VBar>
                      </TreeArea>
                    </DockBody>
                    <DockTabs>
                      <DockTab $on><FolderIcon />Project</DockTab>
                      <DockTab>
                        <svg width="11" height="13" viewBox="0 0 11 13" fill="none" stroke="#6b6450">
                          <path d="M.5 4.500h10v8H.5zM3 4V1.500h5V4M.5 6.500h10" />
                          <path d="M2.500 9.500h6" stroke={BLUE} strokeWidth="2" />
                        </svg>
                        Activities
                      </DockTab>
                      <DockTab>
                        <svg width="11" height="13" viewBox="0 0 12 14" fill="none" stroke="#777"><path d="M.5 4.500h5v9h-5zM2.500 4V2.500h5v9H6M4.500 2V.5h5l2 2v7H8" /></svg>
                        Snippets
                      </DockTab>
                    </DockTabs>
                  </Dock>

                  <Designer>
                    <DocTabs>
                      <DocTab $on>
                        System1_CreateYearly...port (ReadOnly)
                        <svg width="7" height="7" viewBox="0 0 7 7" stroke="#e4effa"><path d="M.5.5l6 6M6.500.5l-6 6" /></svg>
                      </DocTab>
                      <DocTab>Main (ReadOnly)</DocTab>
                      <DocMenu aria-label="Open documents"><Caret s={6} /></DocMenu>
                    </DocTabs>
                    <Crumbs>
                      <span>System1_CreateYea...</span>
                      <Spacer />
                      <button>Expand All</button>
                      <button>Collapse All</button>
                    </Crumbs>
                    <CanvasRow>
                      <Frame $gap={107}>
                        <OuterSeq $gap={5} $line={2}>
                          <Frame $gap={14}>
                            <Frame $gap={12}>
                              <Frame $gap={237}>
                                <Sequence>
                                  <SequenceHeader>
                                    <svg width="12" height="11" viewBox="0 0 12 11" fill="none" stroke="#777">
                                      <path d="M2.500.5h-2v9h2M9.500.5h2v9h-2" />
                                      <path d="M6 0l2 1.500L6 4 4 1.500zM5 5.500h2V7h1.500L6 10 3.500 7H5z" fill={BLUE} stroke="none" />
                                    </svg>
                                    Sequence
                                    <Push><Collapse /></Push>
                                  </SequenceHeader>
                                  <Steps>
                                    <AddStep aria-label="Add activity">
                                      <svg width="11" height="11" viewBox="0 0 11 11" fill="none" stroke="#a8a8a8"><circle cx="5.5" cy="5.5" r="5" /><path d="M3 5.500h5M5.500 3v5" /></svg>
                                    </AddStep>
                                    <Activity $w={238} $on>
                                      <ActivityHead $on><Cursor />Click Save<Push><Collapse /></Push></ActivityHead>
                                      <ActivityBody>
                                        <Spot>
                                          <Shot $w={105}>
                                            <GoldLine />
                                            <PromptRow>
                                              <PromptButton $w={16}>en</PromptButton>
                                              <PromptButton $w={30} $blue>Save</PromptButton>
                                              <RedBox><Caret c="#111" s={4} /></RedBox>
                                              <PromptButton $w={36}>Cancel</PromptButton>
                                              <Push>×</Push>
                                            </PromptRow>
                                            <BlackLine />
                                          </Shot>
                                        </Spot>
                                        <BurgerIcon />
                                      </ActivityBody>
                                    </Activity>
                                    <Connector h={29} />
                                    <Activity $w={238}>
                                      <ActivityHead><Cursor />Click 'menu item&nbsp; Save as'<Push><Collapse /></Push></ActivityHead>
                                      <ActivityBody>
                                        <Spot>
                                          <Shot $w={81}>
                                            <MenuShot>
                                              <MenuLine>Save</MenuLine>
                                              <MenuLine $hot>Save as</MenuLine>
                                              <MenuLine>Save and open</MenuLine>
                                            </MenuShot>
                                          </Shot>
                                        </Spot>
                                        <BurgerIcon />
                                      </ActivityBody>
                                    </Activity>
                                    <Connector h={29} />
                                    <Activity $w={186}>
                                      <ActivityHead>
                                        <AssignMark>A•B</AssignMark>
                                        Assign
                                      </ActivityHead>
                                      <AssignBody>
                                        <AssignInput aria-label="To" />
                                        <AssignInput aria-label="Value" />
                                      </AssignBody>
                                    </Activity>
                                  </Steps>
                                </Sequence>
                              </Frame>
                            </Frame>
                          </Frame>
                        </OuterSeq>
                      </Frame>
                      <VBar>
                        <ScrollButton aria-label="Scroll up"><Arrow dir="up" /></ScrollButton>
                        <Track $grow={95} />
                        <VThumb $grow={21} />
                        <Track $grow={130} />
                        <ScrollButton aria-label="Scroll down"><Arrow dir="down" /></ScrollButton>
                      </VBar>
                    </CanvasRow>
                    <HBar>
                      <ScrollButton aria-label="Scroll left"><Arrow dir="left" /></ScrollButton>
                      <Track $grow={150} />
                      <HThumb $grow={574} />
                      <Track $grow={56} />
                      <ScrollButton aria-label="Scroll right"><Arrow dir="right" /></ScrollButton>
                    </HBar>
                    <ArgArea>
                      <ArgTable>
                        <colgroup>
                          <col /><col width="117" /><col width="116" /><col width="233" />
                        </colgroup>
                        <thead>
                          <tr><th>Name</th><th>Direction</th><th>Argument type</th><th>Default value</th></tr>
                        </thead>
                        <tbody>
                          {["in_TaxID", "in_Year", "in_ReportsDownloadPath"].map((n) => (
                            <tr key={n}>
                              <td>{n}</td><td>In</td><td>String</td>
                              <td><ExprInput aria-label={n} placeholder="Enter a VB expression" /></td>
                            </tr>
                          ))}
                          <tr><td>out_YearlyReportPath</td><td>Out</td><td>String</td><td><em>Default value not supported</em></td></tr>
                        </tbody>
                      </ArgTable>
                    </ArgArea>
                    <DesignerFoot>
                      <FootTab>Variables</FootTab>
                      <FootTab $on>Arguments</FootTab>
                      <FootTab>Imports</FootTab>
                      <FootTools>
                        <svg width="10" height="11" viewBox="0 0 12 13" fill="none" stroke="#444" strokeWidth="1.8" strokeLinecap="round">
                          <path d="M3.500 6V2M5.800 6V1M8 6V1.500M10.200 7V3M1 6.500l2 3" /><path d="M3.500 6h6.500v3q-1 3-3.200 3T3.500 9z" fill="#444" />
                        </svg>
                        <SearchIcon s={11} w={3.5} c="#444" />
                        <ZoomBox>
                          <ZoomSelect aria-label="Zoom"><option>100%</option></ZoomSelect>
                          <Chevron s={5} d="down" c="#666" />
                        </ZoomBox>
                        <svg width="11" height="11" viewBox="0 0 12 12" fill="none" stroke="#444" strokeWidth="1.6"><path d="M1 4V1h3M8 1h3v3M11 8v3H8M4 11H1V8M1 1l10 10M11 1L1 11" /></svg>
                        <svg width="11" height="11" viewBox="0 0 12 12" fill="none" stroke="#444" strokeWidth="1.4"><path d="M.7.7h10.600v10.600H.7zM6 2.500v2M6 7.500v2M2.500 6h2M7.500 6h2M3 3l1 1M9 3L8 4M3 9l1-1M9 9L8 8" /></svg>
                      </FootTools>
                    </DesignerFoot>
                  </Designer>
                </UpperRow>

                <Dock>
                  <DockBody>
                    <DockHeader>
                      Output
                      <Grip />
                      <HeaderActions><Caret c="#555" s={6} /><Pin /></HeaderActions>
                    </DockHeader>
                    <OutputBar>
                      <TimeButton aria-label="Show timestamps">
                        <svg width="11" height="11" viewBox="0 0 12 12" fill="none" stroke="#666" strokeWidth="1.2"><circle cx="6" cy="6" r="5.3" /><path d="M6 2.500V6.500l2.500 1.500" /></svg>
                      </TimeButton>
                      <Counter $w={23} $c="#e0354a">
                        <svg width="11" height="11" viewBox="0 0 12 12" fill="none" stroke="currentColor" strokeWidth="1.2"><path d="M6 1l5.300 10H.7zM6 4.500v3M6 8.500v1.300" /></svg>5
                      </Counter>
                      <Counter $w={23} $c="#f59a2c">
                        <svg width="11" height="11" viewBox="0 0 12 12" fill="none" stroke="currentColor" strokeWidth="1.3"><path d="M1 1h10v10H1zM6 3v4M6 8v1.500" /></svg>0
                      </Counter>
                      <Counter $w={28} $c="#4a74e0"><InfoGlyph s={11} />14</Counter>
                      <Counter $w={23} $c="#666"><InfoGlyph s={11} />1</Counter>
                      <svg width="26" height="10" viewBox="0 0 26 10" fill="none" stroke="#777"><path d="M4.500 1.500h2v2h-2zM4.500 6.500h2v2h-2zM9 1.500h6M9 3.500h6M9 6.500h3M14 5v4" /></svg>
                      <svg width="8" height="8" viewBox="0 0 8 8" stroke="#444" strokeWidth="1.6"><path d="M1 1l6 6M7 1L1 7" /></svg>
                      <More><Caret c="#999" s={4} /></More>
                    </OutputBar>
                    <SearchField><input placeholder="Search" aria-label="Search output" /></SearchField>
                    <LogRow>
                      <InfoGlyph s={8} />
                      Execution started for project: Yearly Report Performer
                      <LogScroll><button aria-label="Up"><Caret s={4} /></button><button aria-label="Down"><Caret s={4} /></button></LogScroll>
                    </LogRow>
                  </DockBody>
                  <DockTabs>
                    <DockTab $on>Output</DockTab>
                    <DockTab>Error List</DockTab>
                  </DockTabs>
                </Dock>
              </LeftAndCenter>

              <Dock $w={213}>
                <DockBody>
                  <DockHeader>
                    Properties
                    <Grip />
                    <HeaderActions><Caret c="#555" s={6} /><Pin /></HeaderActions>
                  </DockHeader>
                  <TypeName>UiPath.Core.Activities.Click</TypeName>
                  <PropArea>
                    {props.map((r, i) => (
                      <PropertyLine key={i} row={r} />
                    ))}
                  </PropArea>
                </DockBody>
                <DockTabs>
                  <DockTab $on>
                    <svg width="11" height="12" viewBox="0 0 11 12" fill="#4a4436"><path d="M7 0Q4 2 5.500 5L0 10.500 1.500 12 7 6.500q3 .5 4-2.500L8.500 5 6.500 3.500 8.500 0z" /></svg>
                    Properties
                  </DockTab>
                  <DockTab>
                    <svg width="12" height="12" viewBox="0 0 12 12" fill="none" stroke="#4a4436"><path d="M0 1.500h4M2.500 1v9.500H6M2.500 6H6M7 2h5M8 5h4M8 7h4M7 10.500h5" strokeWidth="1.4" /></svg>
                    Outline
                  </DockTab>
                  <DockTab>Orchestrator Resources</DockTab>
                </DockTabs>
              </Dock>
            </Workspace>

            <Breakpoints><BreakTab>Breakpoints</BreakTab></Breakpoints>
            <StatusBar>
              <svg width="8" height="8" viewBox="0 0 8 8" fill="none" stroke="#8cbcec"><circle cx="4" cy="4" r="3" /></svg>
              <StatusButton>Orchestrator, Default<Caret c="#a6cbef" s={4} /></StatusButton>
              <StatusButton>
                <svg width="8" height="8" viewBox="0 0 8 8" stroke="#8cbcec" strokeWidth="2"><path d="M4 0v8M0 4h8" /></svg>
                Add To Source Control<Caret c="#a6cbef" s={4} />
              </StatusButton>
            </StatusBar>
          </Studio>
          <Bar $h={28}>
            <SysButton $w={34} aria-label="Start"><StartIcon s={12} /></SysButton>
            <TaskSearch>
              <SearchIcon s={13} c="#222" />
              <input placeholder="Type here to search" />
            </TaskSearch>
            <SysButton $w={36} aria-label="Task view"><TaskViewIcon s={11} /></SysButton>
            <Apps list={appsWithExtra} width={896} left={0} size={17} />
            <Spacer />
            <Tray>
              <Chevron s={12} d="up" c="#fff" w={1.2} />
              <svg width="12" height="12" viewBox="0 0 12 12" fill="none" stroke="#ddd"><path d="M1 1.500h9v8H1z" /><circle cx="8.5" cy="8.5" r="3" fill="#2f9e44" stroke="none" /></svg>
              <svg width="12" height="12" viewBox="0 0 12 12" fill="none" stroke="#ddd"><path d="M1 11A10 10 0 0 1 11 1M4 11a7 7 0 0 1 7-7M7 11a4 4 0 0 1 4-4" /></svg>
              <svg width="12" height="12" viewBox="0 0 12 12" fill="none" stroke="#ddd"><path d="M.5 4.500h2l3-3v9l-3-3h-2zM7.500 4q1 2 0 4M9.500 2.500q2 3.500 0 7" /></svg>
            </Tray>
            <Clock $w={42} $size={8} $line={13}>
              <span>2:01 PM</span>
              <span>3/23/2020</span>
            </Clock>
            <Notify aria-label="Notifications">
              <svg width="20" height="20" viewBox="0 0 20 20">
                <path d="M2 2h12v10H9l-3 3v-3H2z" fill="#fff" />
                <path d="M4 5h8M4 8h8" stroke="#333" />
                <circle cx="13.5" cy="13.5" r="5.5" fill="#444" stroke="#ccc" strokeWidth="0.8" />
                <text x="13.5" y="16.2" textAnchor="middle" fontFamily={FONT} fontSize="7" fill="#fff">13</text>
              </svg>
            </Notify>
            <ShowDesktop aria-label="Show desktop" />
          </Bar>
        </Monitor>
      </Desktop>
    </>
  );
}
